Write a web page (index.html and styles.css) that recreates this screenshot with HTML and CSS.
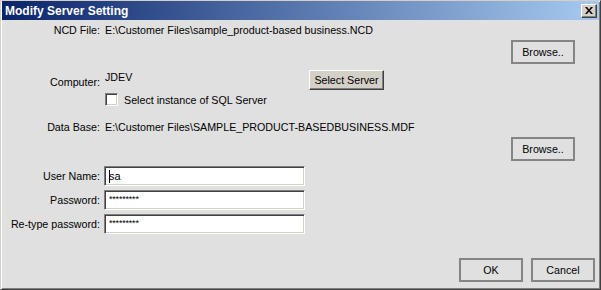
FILE: index.html
```html
<!DOCTYPE html>
<html lang="en">
<head>
  <meta charset="UTF-8" />
  <title>Modify Server Setting</title>
  <link rel="stylesheet" href="styles.css">
</head>
<body>

  <div class="window">
    <div class="titlebar">
      <span class="title">Modify Server Setting</span>
      <span class="close-btn">
        <svg width="8" height="7" viewBox="0 0 8 7">
          <path d="M0 0 L2 0 L4 2.5 L6 0 L8 0 L5 3.5 L8 7 L6 7 L4 4.5 L2 7 L0 7 L3 3.5 Z" fill="#000"/>
        </svg>
      </span>
    </div>

    <div class="body">
      <div class="row row-ncd">
        <span class="label">NCD File:</span>
        <span class="value">E:\Customer Files\sample_product-based business.NCD</span>
      </div>
      <div class="row-btn row-browse1">
        <button class="flat-btn">Browse..</button>
      </div>

      <div class="row row-computer">
        <span class="label label-low">Computer:</span>
        <span class="value value-computer">JDEV</span>
        <button class="raised-btn">Select Server</button>
      </div>
      <div class="row row-check">
        <span class="label"></span>
        <span class="checkbox"></span>
        <span class="check-text">Select instance of SQL Server</span>
      </div>

      <div class="row row-db">
        <span class="label">Data Base:</span>
        <span class="value">E:\Customer Files\SAMPLE_PRODUCT-BASEDBUSINESS.MDF</span>
      </div>
      <div class="row-btn row-browse2">
        <button class="flat-btn">Browse..</button>
      </div>

      <div class="fields">
        <div class="row row-field">
          <span class="label">User Name:</span>
          <div class="input"><span class="caret"></span>sa</div>
        </div>
        <div class="row row-field">
          <span class="label">Password:</span>
          <div class="input stars">*********</div>
        </div>
        <div class="row row-field">
          <span class="label">Re-type password:</span>
          <div class="input stars">*********</div>
        </div>
      </div>

      <div class="footer">
        <button class="flat-btn">OK</button>
        <button class="flat-btn">Cancel</button>
      </div>
    </div>
  </div>

</body>
</html>
```

FILE: styles.css
```css
body {
  margin: 0;
  font-family: 'Liberation Sans', Arial, sans-serif;
  font-size: 10.7px;
  color: #000;
  background: #e0e0e0;
}

.window {
  width: 601px;
  height: 290px;
  box-sizing: border-box;
  border-top: 1px solid #d4d0c8;
  border-left: 1px solid #d4d0c8;
  border-right: 1px solid #404040;
  border-bottom: 1px solid #404040;
  box-shadow: inset 1px 1px 0 #ffffff, inset -1px -1px 0 #808080;
  background: #e0e0e0;
  display: flex;
  flex-direction: column;
  padding: 0 1px 1px 1px;
}

.titlebar {
  height: 19px;
  background: linear-gradient(to right, #0a246a, #a6caf0);
  display: flex;
  align-items: center;
  justify-content: space-between;
  padding: 0 2px 0 3px;
}

.title {
  color: #fff;
  font-family: 'Liberation Sans', Arial, sans-serif;
  font-weight: bold;
  font-size: 12px;
}

.close-btn {
  width: 16px;
  height: 14px;
  box-sizing: border-box;
  background: #d4d0c8;
  border-top: 1px solid #fff;
  border-left: 1px solid #fff;
  border-right: 1px solid #404040;
  border-bottom: 1px solid #404040;
  box-shadow: inset -1px -1px 0 #808080;
  display: flex;
  align-items: center;
  justify-content: center;
}

.body {
  flex: 1;
  display: flex;
  flex-direction: column;
}

.row {
  display: flex;
  align-items: center;
}

.label {
  width: 98px;
  flex-shrink: 0;
  text-align: right;
  margin-right: 5px;
}

.row-ncd {
  height: 14px;
  margin-top: 3px;
}

.row-btn {
  display: flex;
  justify-content: flex-end;
  padding-right: 24px;
}

.row-browse1 {
  margin-top: 3px;
}

.flat-btn {
  width: 64px;
  height: 24px;
  box-sizing: border-box;
  background: #e0e0e0;
  border: 2px solid #858585;
  font-family: inherit;
  font-size: 10.7px;
  padding: 0;
  color: #000;
}

.row-computer {
  height: 20px;
  margin-top: 6px;
}

.label-low {
  align-self: flex-end;
  margin-bottom: 2px;
}

.value-computer {
  width: 204px;
  align-self: flex-start;
  margin-top: 1px;
}

.raised-btn {
  width: 75px;
  height: 20px;
  box-sizing: border-box;
  background: #d4d0c8;
  border-top: 1px solid #fff;
  border-left: 1px solid #fff;
  border-right: 1px solid #404040;
  border-bottom: 1px solid #404040;
  box-shadow: inset -1px -1px 0 #808080;
  font-family: inherit;
  font-size: 10.7px;
  padding: 0;
  color: #000;
}

.row-check {
  height: 13px;
  margin-top: 3px;
}

.checkbox {
  width: 13px;
  height: 13px;
  box-sizing: border-box;
  background: #fff;
  border-top: 1px solid #808080;
  border-left: 1px solid #808080;
  border-right: 1px solid #fff;
  border-bottom: 1px solid #fff;
  box-shadow: inset 1px 1px 0 #404040, inset -1px -1px 0 #d4d0c8;
  margin-right: 6px;
}

.row-db {
  height: 14px;
  margin-top: 14px;
}

.row-browse2 {
  margin-top: 3px;
}

.fields {
  margin-top: 5px;
  display: flex;
  flex-direction: column;
  gap: 4px;
}

.row-field .label {
  margin-right: 4px;
}

.input {
  width: 201px;
  height: 20px;
  box-sizing: border-box;
  background: #fff;
  border-top: 1px solid #808080;
  border-left: 1px solid #808080;
  border-right: 1px solid #fff;
  border-bottom: 1px solid #fff;
  box-shadow: inset 1px 1px 0 #404040, inset -1px -1px 0 #d4d0c8;
  padding-left: 4px;
  display: flex;
  align-items: center;
  font-size: 11px;
}

.caret {
  width: 1px;
  height: 13px;
  background: #000;
  margin-right: -1px;
}

.stars {
  font-size: 9px;
  letter-spacing: -0.2px;
  align-items: flex-start;
  padding-top: 3px;
}

.footer {
  margin-top: auto;
  display: flex;
  justify-content: flex-end;
  gap: 8px;
  padding-right: 4px;
  padding-bottom: 6px;
}
```
